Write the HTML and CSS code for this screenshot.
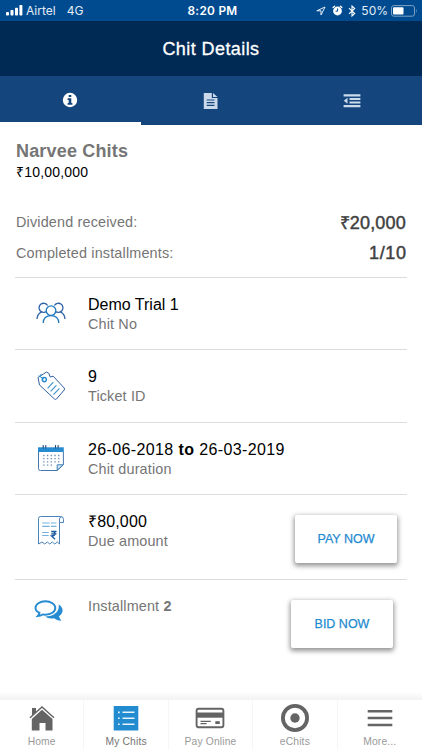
FILE: index.html
```html
<!DOCTYPE html>
<html lang="en">
<head>
<meta charset="utf-8">
<title>Chit Details</title>
<link rel="stylesheet" href="styles.css">
</head>
<body>
<div class="app">
  <div class="status">
    <div class="status-left">
      <svg width="17" height="11" viewBox="0 0 17 11" fill="#fff"><rect x="0" y="7" width="3" height="3.6" rx=".8"/><rect x="4.5" y="5" width="3" height="5.6" rx=".8"/><rect x="9" y="2.7" width="3" height="7.9" rx=".8"/><rect x="13.4" y="0" width="3" height="10.6" rx=".8"/></svg>
      <span class="carrier">Airtel</span><span class="network">4G</span>
    </div>
    <div class="time">8:20 PM</div>
    <div class="status-right">
      <svg width="10" height="10" viewBox="0 0 10 10" fill="none" stroke="#e6eef8" stroke-width="1"><path d="M9 1 .8 4.8H5V9z"/></svg>
      <svg class="alarm" width="11" height="11" viewBox="0 0 11 11"><circle cx="5.5" cy="6" r="4.4" fill="#fff"/><path d="M1.1 2.6 2.6 1.2M9.9 2.6 8.4 1.2" stroke="#fff" stroke-width="1.3" stroke-linecap="round"/><path d="M5.6 3.4v2.8H3.6" fill="none" stroke="#004b8f"/></svg>
      <svg class="bt" width="8" height="12" viewBox="0 0 8 12" fill="none" stroke="#fff" stroke-width="1.1"><path d="M1 3.2 6.7 8.5 4 11V1l2.7 2.5L1 8.8"/></svg>
      <span class="percent">50%</span>
      <svg class="battery" width="27" height="12" viewBox="0 0 27 12"><rect x=".5" y=".6" width="23" height="10.6" rx="2.3" fill="none" stroke="#7da4c9"/><rect x="2" y="2.2" width="10.5" height="7.4" rx="1" fill="#fff"/><path d="M25 4.1q1.5 1.8 0 3.7z" fill="#7da4c9"/></svg>
    </div>
  </div>
  <header class="header"><h1>Chit Details</h1></header>
  <nav class="tabs">
    <div class="tab active"><svg width="16" height="16" viewBox="0 0 16 16"><circle cx="8" cy="8" r="7.2" fill="#fff"/><path d="M6.7 2.9h2.6v2.2H6.7zM5.6 6.2h3.7v4.7h1.1v1.8H5.6v-1.8h1.1V8H5.6z" fill="#14467d"/></svg></div>
    <div class="tab"><svg width="16" height="18" viewBox="0 0 16 18"><path d="M.8 1h8v5h5.7v11H.8z" fill="#cbdaeb"/><path d="M10 .9 14.5 5H10z" fill="#cbdaeb"/><path d="M3.7 8h7.8M3.7 10.7h7.8M3.7 13.4h7.8" stroke="#16477e" stroke-width="1.2"/></svg></div>
    <div class="tab"><svg width="18" height="14" viewBox="0 0 18 14" fill="#cbdaeb"><path d="M.6.3h16.8v2.1H.6zM6.5 3.9h10.9V6H6.5zM6.5 7.5h10.9v2.1H6.5zM.6 11.1h16.8v2.1H.6zM4.5 3.8v6L.8 6.8z"/></svg></div>
  </nav>
  <main class="content">
    <section class="summary">
      <h2>Narvee Chits</h2>
      <div class="value">₹10,00,000</div>
      <div class="stat first"><span class="label">Dividend received:</span><span class="figure">₹20,000</span></div>
      <div class="stat"><span class="label">Completed installments:</span><span class="figure ratio">1/10</span></div>
    </section>
    <section class="row">
      <div class="icon"><svg width="30" height="24" viewBox="0 0 30 24" fill="none" stroke="#2379bd" stroke-width="1.3"><g stroke="#2e62a5"><path d="M10.8 9.2A4.6 4.6 0 1 1 11.6 3.5M18.4 3.5a4.6 4.6 0 1 1 .8 5.7M1 17c.2-3.5 2-6.2 5.3-7.1M29 17c-.2-3.5-2-6.2-5.3-7.1"/></g><circle cx="15" cy="8.6" r="4.8"/><path d="M7.2 21c.2-4.8 3.4-7.4 7.8-7.4s7.6 2.6 7.8 7.4"/></svg></div>
      <div class="text"><div class="main tight">Demo Trial 1</div><div class="sub">Chit No</div></div>
    </section>
    <section class="row ticket">
      <div class="icon"><svg width="30" height="30" viewBox="0 0 30 30" fill="none" stroke="#315f9d"><path d="M2 6.5 10.5 1 13 2.5 14.2 6l3-.8L28.2 17q.7 1 0 2l-7.7 9q-1 .8-2 0L3.5 14z"/><circle cx="8.3" cy="8.6" r="2.1" stroke="#268cce" stroke-width="1.4"/><path d="M2.6 4.6 8 8.2M4 4l1.8-.2" stroke="#268cce"/><path d="m17.3 11.2-5.7 6.1M20.4 14.3l-5.8 6.1M23.4 17.4l-5.9 6.2" stroke="#4495ce" stroke-width="1.2"/></svg></div>
      <div class="text"><div class="main">9</div><div class="sub">Ticket ID</div></div>
    </section>
    <section class="row">
      <div class="icon"><svg width="28" height="28" viewBox="0 0 28 28"><path d="M1.5 7v16.5q0 2 2 2h16.7l6.2-5.7V7" fill="#fff" stroke="#4775ad"/><path d="M1 2.3h25.8V7H1z" fill="#268bd0"/><path d="M6.2 0v3.5M8.8 0v3.5M18.5 0v3.5M21.1 0v3.5" stroke="#234f82" stroke-width="1.1"/><path d="M20.2 25.2v-5.4h5.9z" fill="#d8ecfa" stroke="#397bb7"/><path d="M6.2 10.5h16.5M6.2 13.7h16.5M6.2 16.9h16.5M6.2 20.1h11" stroke="#6f90b8" stroke-width="1.3" stroke-dasharray="1.4 2.3"/></svg></div>
      <div class="text"><div class="main">26-06-2018 <b>to</b> 26-03-2019</div><div class="sub">Chit duration</div></div>
    </section>
    <section class="row due">
      <div class="icon"><svg width="28" height="32" viewBox="0 0 28 32"><path d="M1.5 29V3.5q0-2 2-2h20q3 0 3 3v3h-4V29l-2.2-2-2.5 2-2.5-2-2.5 2-2.5-2-2.5 2L5 27z" fill="#fff" stroke="#4a83bb"/><path d="M22.5 7.5V4q0-2.200 2-2.200" fill="none" stroke="#4a83bb"/><path d="M5.2 8h7.5M14 8h5.5M5.2 11.3h7.5M14 11.3h5.5M5.2 17.5h6.5M5.2 20.5h6.5" stroke="#73b1de" stroke-width="1.2"/><path d="M14.2 16.5h5.3M14.2 18.9h5.3M15 16.5q3.3.1 3.1 2.4-.3 2-3.6 2l3.5 3.3" fill="none" stroke="#1d59a0" stroke-width="1.3"/></svg></div>
      <div class="text"><div class="main mid">₹80,000</div><div class="sub">Due amount</div></div>
      <button class="btn pay">PAY NOW</button>
    </section>
    <section class="row bid-row">
      <div class="icon chat"><svg width="30" height="24" viewBox="0 0 30 24"><path d="M24.7 5.6c5.3 3.2 5 8.8.3 11.6.4 1.8 1.4 2.8 2.2 4.6-3 0-5.3-1.4-7-2.6-3.5.5-7 .1-9-1.7 8.2 0 14.6-4.2 13.5-11.9z" fill="#268bd0"/><path d="M11.4 2.2c5.5 0 9.9 3 9.9 6.8s-4.4 6.7-9.9 6.7c-1 0-2-.1-2.9-.3-1.5 1.1-3 1.6-4.8 1.7 1-1.1 1.6-2 1.8-3.2C3 12.7 1.5 11 1.5 9c0-3.8 4.4-6.8 9.9-6.8z" fill="#fff" stroke="#268bd0" stroke-width="1.9"/></svg></div>
      <div class="text"><div class="sub">Installment <b>2</b></div></div>
      <button class="btn bid">BID NOW</button>
    </section>
  </main>
  <div class="fade"></div>
  <nav class="bottom">
    <div class="item"><svg width="26" height="28" viewBox="0 0 26 28"><path d="M3 3h4v4L3 10.5z" fill="#646464"/><path d="M1 12.7 13 2l12 10.7" fill="none" stroke="#646464" stroke-width="1.5"/><path d="M13 4.8 23.5 14v11.5h-7V18h-6v7.5H2.8V14z" fill="#646464"/></svg><span>Home</span></div>
    <div class="item selected"><svg width="26" height="28" viewBox="0 0 26 28"><rect x=".7" y="1" width="24.6" height="24.5" fill="#238bd0"/><path d="M9.5 7.2h12M9.5 13.2h12M9.5 19.2h12" stroke="#e7f4fc" stroke-width="1.4"/><path d="M5 6.5h1.7v1.7H5zM5 12.4h1.7v1.7H5zM5 18.4h1.7v1.7H5z" fill="#e7f4fc"/></svg><span>My Chits</span></div>
    <div class="item"><svg width="30" height="28" viewBox="0 0 30 28"><rect x="1.600" y="3.8" width="26.800" height="18.5" rx="2" fill="#fff" stroke="#646464" stroke-width="1.9"/><path d="M2 7.5h26v5.2H2z" fill="#646464"/><path d="M5.5 16.4h10.3M5.5 18.7h6" stroke="#646464" stroke-width="1.2"/><path d="M20.3 16.2h4.5v2.8h-4.5z" fill="#646464"/></svg><span>Pay Online</span></div>
    <div class="item"><svg class="target" width="30" height="28" viewBox="0 0 30 28"><circle cx="15" cy="13" r="12.1" fill="none" stroke="#646464" stroke-width="3.8"/><circle cx="15" cy="13" r="4.7" fill="#646464"/></svg><span>eChits</span></div>
    <div class="item"><svg width="26" height="28" viewBox="0 0 26 28"><path d="M.7 6.3h24.6M.7 13.1h24.6M.7 19.9h24.6" stroke="#646464" stroke-width="2.5"/></svg><span>More...</span></div>
  </nav>
</div>
</body>
</html>
```
FILE: styles.css
```css
* { box-sizing: border-box; }
body { margin: 0; background: #fff; font-family: "Liberation Sans", Arial, sans-serif; color: #000; }
h1, h2 { margin: 0; }
svg { display: block; flex: none; }
.app { width: 422px; height: 750px; display: flex; flex-direction: column; overflow: hidden; white-space: nowrap; }
.status { height: 21px; flex: none; display: grid; grid-template-columns: 1fr 60px 1fr; align-items: center; padding: 0 4px 0 6px; background: #004b8f; color: #e4edf6; font: 12px/20px Inter, sans-serif; }
.status-left, .status-right { display: flex; align-items: center; }
.carrier { margin-left: 3px; }
.network { margin-left: 11px; }
.time { color: #fff; font-weight: 600; font-size: 11.8px; letter-spacing: .3px; text-align: center; padding-left: 1px; }
.status-right { justify-content: flex-end; }
.alarm { margin-left: 6px; }
.bt { margin-left: 5px; }
.percent { margin-left: 5px; }
.battery { margin-left: 3px; }
.header { height: 55px; flex: none; background: #002a54; display: flex; align-items: center; justify-content: center; }
h1 { color: #fff; font-size: 18px; line-height: 24px; font-weight: 400; letter-spacing: .42px; -webkit-text-stroke: .3px #fff; }
.tabs { height: 49px; flex: none; display: grid; grid-template-columns: repeat(3, 1fr); background: #14467d; }
.tab { display: flex; align-items: center; justify-content: center; }
.tab.active { border-bottom: 3px solid #fff; padding-top: 2px; }
.content { flex: none; height: 567px; padding: 0 15px; }
.summary { height: 153px; padding: 15px 1px 0; border-bottom: 1px solid #dcdcdc; }
h2 { font-size: 18px; line-height: 22px; letter-spacing: .17px; color: #757575; }
.value { font-size: 14px; line-height: 20px; letter-spacing: .2px; }
.stat { display: flex; align-items: center; justify-content: space-between; height: 31px; }
.stat.first { margin-top: 24px; }
.label { color: #757575; font-size: 14.4px; letter-spacing: .17px; }
.figure { color: #404040; font-size: 18px; letter-spacing: .2px; -webkit-text-stroke: .45px #404040; }
.figure.ratio { letter-spacing: .6px; margin-right: -.5px; padding-top: 2px; }
.row { height: 72px; display: flex; border-bottom: 1px solid #dcdcdc; }
.row.ticket { height: 73px; }
.row.due { height: 85px; }
.row.bid-row { height: 90px; border: 0; }
.icon { width: 73px; height: 72px; padding-right: 1px; display: flex; justify-content: center; align-items: center; }
.icon.chat { height: 62px; padding-right: 5px; }
.text { flex: 1; padding-top: 17px; }
.main { font-size: 16px; line-height: 20px; letter-spacing: .38px; }
.main.tight { letter-spacing: 0; }
.main.mid { letter-spacing: .15px; }
.sub { font-size: 14.4px; line-height: 19px; letter-spacing: .15px; color: #757575; }
.btn { height: 48px; width: 102px; padding: 0; border: 0; border-radius: 2px; background: #fff; color: #238bd0; font: 12.5px/48px "Liberation Sans", Arial, sans-serif; -webkit-text-stroke: .25px #238bd0; box-shadow: 0 2px 5px 1px rgba(0,0,0,.42); }
.pay { margin: 20px 10px 0 0; }
.bid { margin: 20px 14px 0 0; }
.fade { flex: none; height: 8px; background: linear-gradient(#fff, #f2f2f2); }
.bottom { flex: none; height: 50px; display: grid; grid-template-columns: repeat(5, 1fr); background: #fff; }
.item { display: flex; flex-direction: column; align-items: center; padding-top: 5px; border-right: 1px solid #f6f6f6; color: #999; font-size: 10.3px; line-height: 17px; letter-spacing: .15px; }
.item:last-child { border: 0; }
.selected { color: #757575; }
.target { overflow: visible; }
```
